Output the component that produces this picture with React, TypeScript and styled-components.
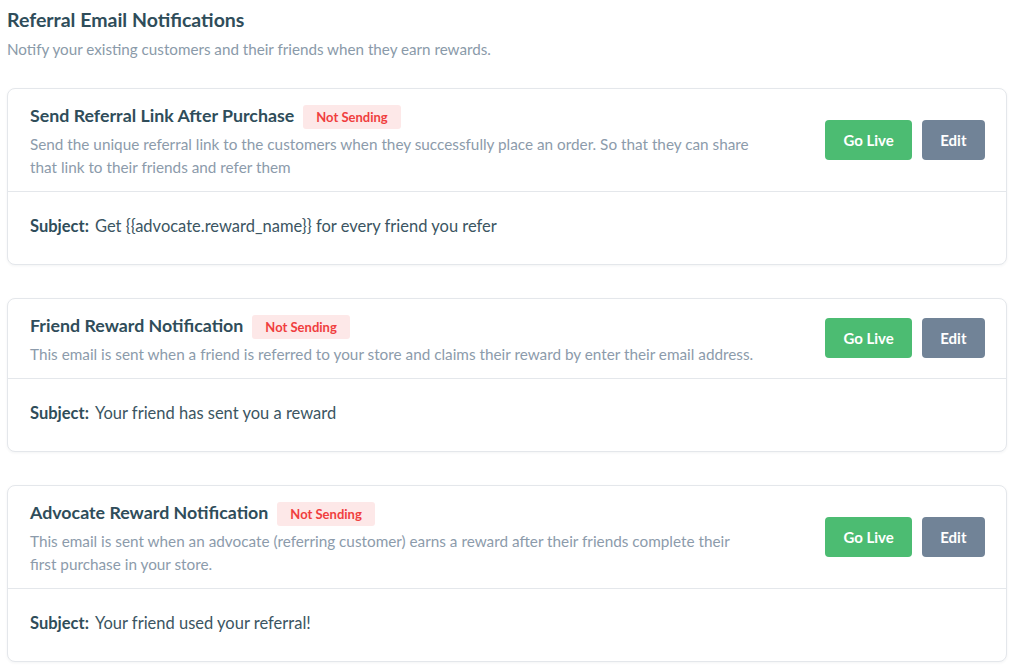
import React from 'react'
import styled, { createGlobalStyle } from 'styled-components'

const GlobalStyle = createGlobalStyle`
    body {
        margin: 0;
        background: #fff;
        font-family: Lato, "Open Sans", sans-serif;
    }
`

const Page = styled.div`
    padding: 8px 7px 20px;
`

const Heading = styled.h2`
    margin: 0;
    font-size: 19.5px;
    line-height: 24px;
    font-weight: 700;
    color: #2f4d5a;
`

const Intro = styled.p`
    margin: 7px 0 29px;
    font-size: 15.2px;
    line-height: 20px;
    color: #8a9aa9;
`

const CardList = styled.div`
    display: flex;
    flex-direction: column;
    gap: 33px;
`

const Card = styled.div`
    background: #fff;
    border: 1px solid #e4e7eb;
    border-radius: 8px;
    box-shadow: 0 1px 3px rgba(20, 40, 60, 0.05);
`

const CardTop = styled.div`
    display: flex;
    align-items: center;
    justify-content: space-between;
    padding: 14px 21px 12px 22px;
    border-bottom: 1px solid #e4e7eb;
`

const Info = styled.div`
    max-width: 726px;
`

const TitleRow = styled.div`
    display: flex;
    align-items: center;
    gap: 9px;
    height: 24px;
`

const Title = styled.h3`
    margin: 0;
    font-size: 17.8px;
    font-weight: 700;
    color: #2f4d5a;
`

const Badge = styled.span`
    display: inline-flex;
    align-items: center;
    height: 24px;
    margin-top: 4px;
    padding: 0 13px;
    border-radius: 3px;
    background: #fde8e8;
    color: #f03e3e;
    font-size: 13px;
    font-weight: 700;
`

const Description = styled.p`
    margin: 6px 0 0;
    font-size: 15.3px;
    line-height: 23px;
    color: #8c9bab;
`

const Actions = styled.div`
    display: flex;
    gap: 10px;
    flex-shrink: 0;
    margin-bottom: 3px;
`

const Button = styled.button<{ variant: 'green' | 'gray' }>`
    height: 40px;
    padding: 0 ${props => props.variant === 'green' ? '18px' : '18.5px'};
    border: none;
    border-radius: 4px;
    background: ${props => props.variant === 'green' ? '#4cbc72' : '#718397'};
    color: #fff;
    font-family: Lato, sans-serif;
    font-size: 15px;
    font-weight: 700;
    cursor: pointer;
`

const Subject = styled.div`
    padding: 22px 22px 26px;
    font-size: 16.5px;
    line-height: 24px;
    color: #3b5562;

    b {
        font-weight: 700;
        color: #2f4d5a;
        margin-right: 6px;
    }
`

type Notification = {
    title: string;
    description: string;
    subject: string;
}

const notifications: Notification[] = [
    {
        title: 'Send Referral Link After Purchase',
        description: 'Send the unique referral link to the customers when they successfully place an order. So that they can share that link to their friends and refer them',
        subject: 'Get {{advocate.reward_name}} for every friend you refer',
    },
    {
        title: 'Friend Reward Notification',
        description: 'This email is sent when a friend is referred to your store and claims their reward by enter their email address.',
        subject: 'Your friend has sent you a reward',
    },
    {
        title: 'Advocate Reward Notification',
        description: 'This email is sent when an advocate (referring customer) earns a reward after their friends complete their first purchase in your store.',
        subject: 'Your friend used your referral!',
    },
]

export default function App() {
    return (
        <Page>
            <GlobalStyle />
            <Heading>Referral Email Notifications</Heading>
            <Intro>Notify your existing customers and their friends when they earn rewards.</Intro>

            <CardList>
                {notifications.map(n => (
                    <Card key={n.title}>
                        <CardTop>
                            <Info>
                                <TitleRow>
                                    <Title>{n.title}</Title>
                                    <Badge>Not Sending</Badge>
                                </TitleRow>
                                <Description>{n.description}</Description>
                            </Info>
                            <Actions>
                                <Button variant='green'>Go Live</Button>
                                <Button variant='gray'>Edit</Button>
                            </Actions>
                        </CardTop>
                        <Subject><b>Subject:</b>{n.subject}</Subject>
                    </Card>
                ))}
            </CardList>
        </Page>
    )
}
